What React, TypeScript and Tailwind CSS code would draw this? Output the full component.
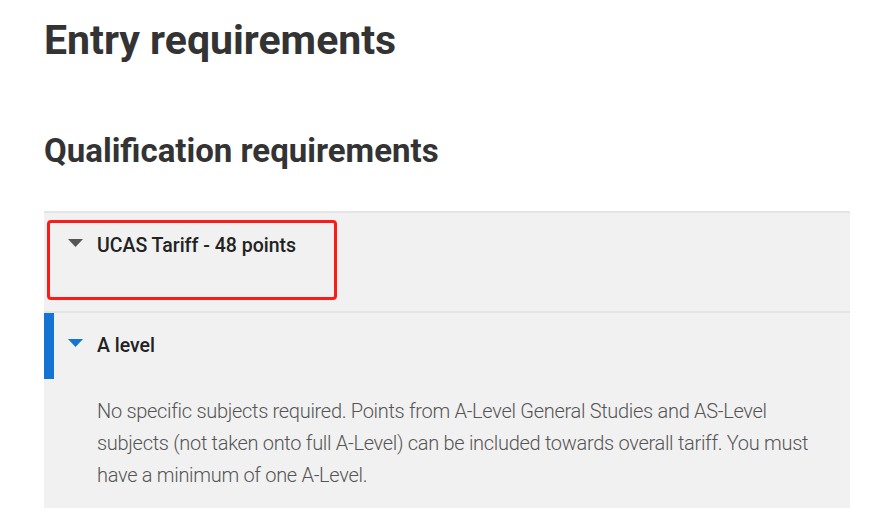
import React from "react";

const items = [
  {
    title: "UCAS Tariff - 48 points",
    active: false,
    body: null as string | null,
  },
  {
    title: "A level",
    active: true,
    body:
      "No specific subjects required. Points from A-Level General Studies and AS-Level subjects (not taken onto full A-Level) can be included towards overall tariff. You must have a minimum of one A-Level.",
  },
];

function Caret({ color }: { color: string }) {
  return (
    <svg width="15" height="8" viewBox="0 0 15 8" className="mt-[5px] shrink-0">
      <polygon points="0,0 15,0 7.5,8" fill={color} />
    </svg>
  );
}

export default function App() {
  return (
    <div className="min-h-[526px] w-full bg-white pl-[44px] pr-[22px] font-['Roboto',sans-serif] text-[#333]">
      <h1 className="pt-[16px] text-[41px] font-bold leading-[48px]">Entry requirements</h1>
      <h2 className="mt-[67px] text-[33px] font-bold leading-[40px]">Qualification requirements</h2>

      <div className="mt-[40px] border-t-2 border-[#e4e4e4] bg-[#f1f1f1]">
        {items.map((it, i) => (
          <div
            key={i}
            className={`relative ${i > 0 ? "border-t-2 border-[#e4e4e4]" : ""} ${
              it.body ? "pb-[17px]" : "h-[98px]"
            }`}
          >
            {it.active && (
              <div className="absolute left-0 top-0 h-[66px] w-[10px] bg-[#1474d4]" />
            )}
            <div className="flex items-start gap-[14px] pl-[24px] pt-[21px] text-[19.5px] font-medium leading-[24px] text-[#222]">
              <Caret color={it.active ? "#1474d4" : "#555"} />
              <span>{it.title}</span>
            </div>
            {it.body && (
              <p className="mt-[37px] pl-[53px] pr-[30px] text-[20px] font-light leading-[32px] tracking-[-0.3px] text-[#555]">
                {it.body}
              </p>
            )}
            {i === 0 && (
              <div className="pointer-events-none absolute left-[3px] top-[7px] h-[80px] w-[290px] rounded-[4px] border-[3px] border-[#ff1a1a]" />
            )}
          </div>
        ))}
      </div>
    </div>
  );
}
